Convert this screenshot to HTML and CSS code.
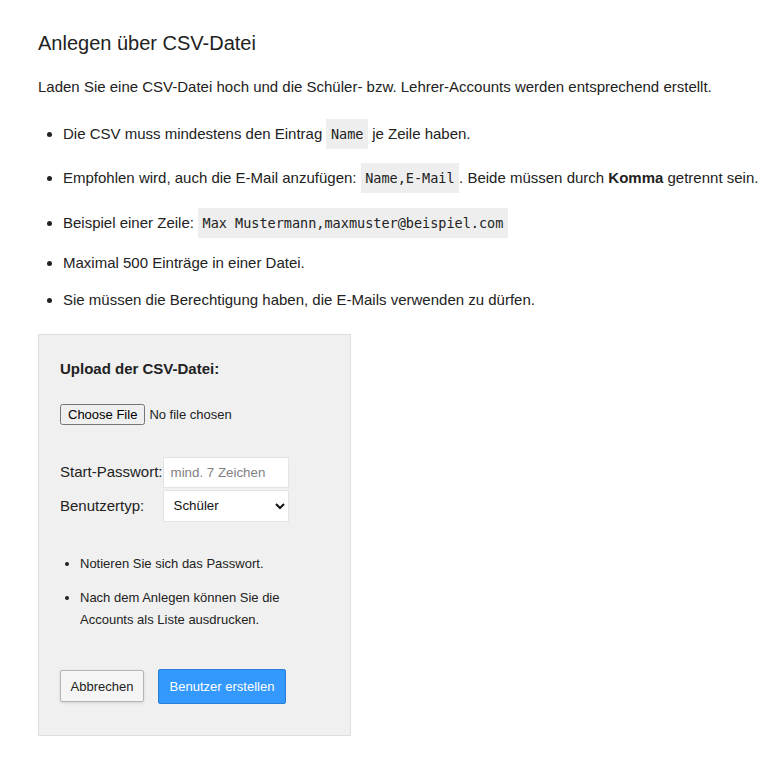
FILE: index.html
```html
<!DOCTYPE html>
<html lang="de">
<head>
<meta charset="utf-8">
<title>Anlegen über CSV-Datei</title>
<link rel="stylesheet" href="styles.css">
</head>
<body>
<main class="page">
  <h2 class="title">Anlegen über CSV-Datei</h2>
  <p class="intro">Laden Sie eine CSV-Datei hoch und die Schüler- bzw. Lehrer-Accounts werden entsprechend erstellt.</p>
  <ul class="rules">
    <li>Die CSV muss mindestens den Eintrag <code>Name</code> je Zeile haben.</li>
    <li>Empfohlen wird, auch die E-Mail anzufügen: <code>Name,E-Mail</code>. Beide müssen durch <strong>Komma</strong> getrennt sein.</li>
    <li>Beispiel einer Zeile: <code>Max Mustermann,maxmuster@beispiel.com</code></li>
    <li>Maximal 500 Einträge in einer Datei.</li>
    <li>Sie müssen die Berechtigung haben, die E-Mails verwenden zu dürfen.</li>
  </ul>
  <form class="upload">
    <div class="upload-title">Upload der CSV-Datei:</div>
    <div class="file-row"><input type="file" class="file" accept=".csv"></div>
    <div class="fields">
      <label class="field-label" for="pw">Start-Passwort:</label>
      <input id="pw" class="field-input" type="text" placeholder="mind. 7 Zeichen">
      <label class="field-label" for="typ">Benutzertyp:</label>
      <select id="typ" class="field-select">
        <option>Schüler</option>
        <option>Lehrer</option>
      </select>
    </div>
    <ul class="notes">
      <li>Notieren Sie sich das Passwort.</li>
      <li>Nach dem Anlegen können Sie die Accounts als Liste ausdrucken.</li>
    </ul>
    <div class="actions">
      <button type="button" class="btn btn-cancel">Abbrechen</button>
      <button type="submit" class="btn btn-primary">Benutzer erstellen</button>
    </div>
  </form>
</main>
</body>
</html>
```
FILE: styles.css
```css
html, body {
  margin: 0;
  padding: 0;
  background: #fff;
}
body {
  font-family: "Liberation Sans", Arial, sans-serif;
  color: #222;
  font-size: 15px;
  line-height: 22.5px;
}
.page {
  padding: 31px 6px 20px 38px;
}
.title {
  margin: 0 0 21px;
  font-size: 20px;
  line-height: 24px;
  font-weight: normal;
}
.intro {
  margin: 0 0 20px;
}
.rules {
  margin: 0 0 22px;
  padding-left: 25px;
}
.rules li {
  margin-bottom: 14.5px;
}
.rules li:last-child {
  margin-bottom: 0;
}
code {
  display: inline-block;
  font-family: "DejaVu Sans Mono", "Liberation Mono", monospace;
  font-size: 13.5px;
  line-height: 18px;
  padding: 6px 4.5px;
  background: #eeeeee;
  color: #222;
}
strong {
  font-weight: bold;
}
.upload {
  width: 269px;
  padding: 23px 21px 31px;
  background: #f0f0f0;
  border: 1px solid #dddddd;
  font-size: 13px;
  line-height: 22px;
}
.upload-title {
  font-size: 15px;
  font-weight: bold;
  line-height: 22px;
  margin-bottom: 24px;
}
.file-row {
  height: 20px;
  margin-bottom: 33px;
}
.file {
  font-family: "Liberation Sans", Arial, sans-serif;
  font-size: 13px;
  color: #222;
}
.fields {
  display: grid;
  grid-template-columns: max-content 126px;
  column-gap: 0;
  row-gap: 2px;
  align-items: center;
}
.field-label {
  font-size: 15px;
  color: #222;
  white-space: nowrap;
}
.field-input {
  box-sizing: border-box;
  height: 31px;
  width: 126px;
  border: 1px solid #e4e4e4;
  background: #fff;
  padding: 0 7px;
  font-family: "Liberation Sans", Arial, sans-serif;
  font-size: 13.33px;
  color: #222;
  outline: none;
}
.field-input::placeholder {
  color: #808080;
}
.field-select {
  box-sizing: border-box;
  height: 32px;
  width: 126px;
  border: 1px solid #e4e4e4;
  background: #fff;
  padding: 0 6px;
  font-family: "Liberation Sans", Arial, sans-serif;
  font-size: 13.33px;
  color: #111;
}
.notes {
  margin: 31px 0 0;
  padding-left: 20px;
}
.notes li {
  margin-bottom: 12px;
}
.notes li:last-child {
  margin-bottom: 0;
}
.actions {
  display: flex;
  align-items: center;
  gap: 14px;
  margin-top: 38px;
}
.btn {
  font-family: "Liberation Sans", Arial, sans-serif;
  font-size: 13px;
  cursor: pointer;
  border-radius: 2px;
}
.btn-cancel {
  width: 84px;
  height: 32px;
  background: #f5f5f5;
  color: #222;
  border: 1px solid #b5b5b5;
  box-shadow: 0 1px 3px rgba(0, 0, 0, 0.12);
}
.btn-primary {
  width: 128px;
  height: 35px;
  background: #3399ff;
  color: #fff;
  border: 1px solid #2b80d6;
}
```
